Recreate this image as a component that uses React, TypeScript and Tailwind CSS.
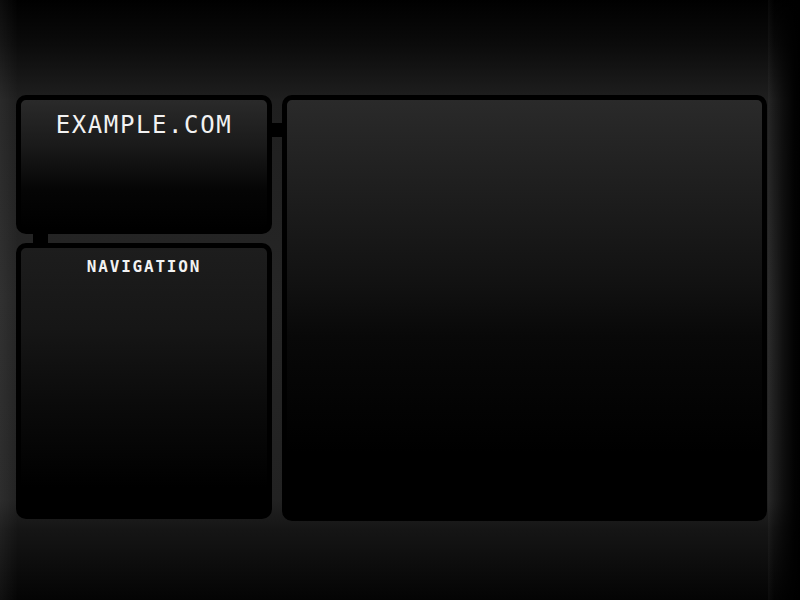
export default function App() {
    return (
        <div className="relative h-[600px] w-full overflow-hidden bg-[linear-gradient(to_bottom,#000_0px,#0b0b0b_45px,#1f1f1f_100px,#262626_300px,#222_500px,#151515_530px,#040404_600px)]">
            {/* edge shading */}
            <div className="pointer-events-none absolute inset-y-0 left-0 w-[18px] bg-[linear-gradient(to_right,rgba(255,255,255,0.05),rgba(255,255,255,0))]" />
            <div className="pointer-events-none absolute inset-y-0 right-0 w-[32px] bg-[linear-gradient(to_right,rgba(255,255,255,0.03)_0px,rgba(0,0,0,0.15)_6px,rgba(0,0,0,0.6)_16px,rgba(0,0,0,0.92)_26px,#000_32px)]" />

            <div className="relative flex items-start pl-[16px] pt-[95px]">
                <div className="flex w-[256px] flex-col">
                    <div className="h-[139px] rounded-[10px] border-[5px] border-black bg-[linear-gradient(to_bottom,#2a2a2a_0%,#1a1a1a_35%,#050505_70%,#000_100%)]">
                        <h1 className="pt-[13px] text-center font-['DejaVu_Sans_Mono',monospace] text-[24px] leading-none tracking-[1.6px] text-[#f2f2f2]">
                            EXAMPLE.COM
                        </h1>
                    </div>
                    <div className="ml-[17px] h-[9px] w-[15px] bg-black" />
                    <div className="h-[276px] rounded-[10px] border-[5px] border-black bg-[linear-gradient(to_bottom,#1d1d1d_0%,#161616_30%,#0a0a0a_60%,#000_90%)]">
                        <h2 className="pt-[11px] text-center font-['DejaVu_Sans_Mono',monospace] text-[16px] font-bold leading-none tracking-[1.8px] text-[#f2f2f2]">
                            NAVIGATION
                        </h2>
                    </div>
                </div>

                <div className="mt-[28px] h-[14px] w-[10px] bg-black" />

                <div className="h-[426px] w-[485px] rounded-[10px] border-[5px] border-black bg-[linear-gradient(to_bottom,#2a2a2a_0%,#1c1c1c_25%,#111_45%,#080808_57%,#000_85%)]" />
            </div>
        </div>
    );
}
